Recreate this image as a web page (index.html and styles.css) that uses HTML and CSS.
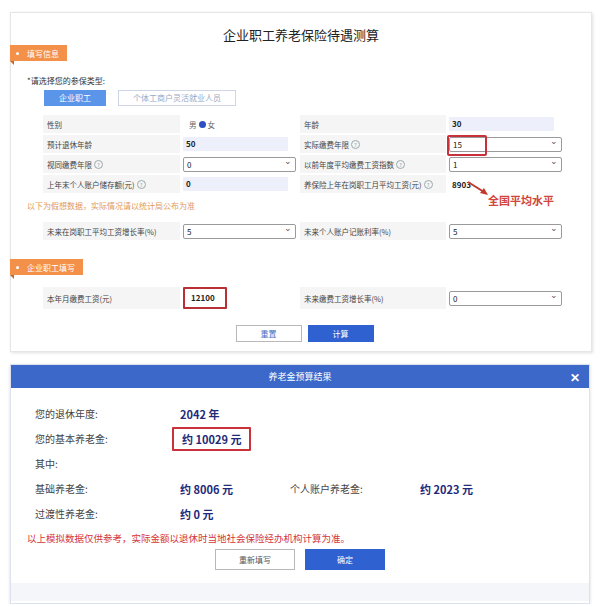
FILE: index.html
```html
<!DOCTYPE html>
<html lang="zh">
<head>
  <meta charset="UTF-8">
  <title>企业职工养老保险待遇测算</title>
  <link rel="stylesheet" href="styles.css">
</head>
<body>
  <div class="panel">
    <h2 class="title">企业职工养老保险待遇测算</h2>

    <div class="tag"><span class="dot"></span>填写信息</div>
    <p class="type-label">*请选择您的参保类型:</p>
    <div class="type-btns">
      <span class="type-btn active">企业职工</span>
      <span class="type-btn">个体工商户灵活就业人员</span>
    </div>

    <div class="grid">
      <div class="lab">性别</div>
      <div class="val"><span class="radio">男 <i class="check"></i> 女</span></div>
      <div class="lab">年龄</div>
      <div class="val"><span class="inp">30</span></div>

      <div class="lab">预计退休年龄</div>
      <div class="val"><span class="inp">50</span></div>
      <div class="lab">实际缴费年限<i class="help">?</i></div>
      <div class="val"><span class="sel mark">15</span></div>

      <div class="lab">视同缴费年限<i class="help">?</i></div>
      <div class="val"><span class="sel">0</span></div>
      <div class="lab">以前年度平均缴费工资指数<i class="help">?</i></div>
      <div class="val"><span class="sel">1</span></div>

      <div class="lab">上年末个人账户储存额(元)<i class="help">?</i></div>
      <div class="val"><span class="inp">0</span></div>
      <div class="lab">养保险上年在岗职工月平均工资(元)<i class="help">?</i></div>
      <div class="val"><span class="plain">8903</span></div>
    </div>

    <div class="note-row">
      <p class="note">以下为假想数据，实际情况请以统计局公布为准</p>
      <span class="avg">全国平均水平</span>
      <svg class="arrow" width="24" height="16" viewBox="0 0 24 16">
        <path d="M2 2 L18 12" stroke="#c0392b" stroke-width="2" fill="none"/>
        <path d="M14 13 L22 15 L18 8 Z" fill="#c0392b"/>
      </svg>
    </div>

    <div class="grid">
      <div class="lab">未来在岗职工平均工资增长率(%)</div>
      <div class="val"><span class="sel">5</span></div>
      <div class="lab">未来个人账户记账利率(%)</div>
      <div class="val"><span class="sel">5</span></div>
    </div>

    <div class="tag tag2"><span class="dot"></span>企业职工填写</div>

    <div class="grid tall">
      <div class="lab">本年月缴费工资(元)</div>
      <div class="val"><span class="plain boxed">12100</span></div>
      <div class="lab">未来缴费工资增长率(%)</div>
      <div class="val"><span class="sel">0</span></div>
    </div>

    <div class="actions">
      <span class="btn">重置</span>
      <span class="btn primary">计算</span>
    </div>
  </div>

  <div class="result">
    <div class="result-head">养老金预算结果<span class="close">✕</span></div>
    <div class="result-body">
      <div class="res-row">
        <span class="k">您的退休年度:</span><span class="v">2042 年</span>
      </div>
      <div class="res-row">
        <span class="k">您的基本养老金:</span><span class="v big">约 10029 元</span>
      </div>
      <div class="res-row">
        <span class="k">其中:</span>
      </div>
      <div class="res-row">
        <span class="k">基础养老金:</span><span class="v">约 8006 元</span>
        <span class="k k2">个人账户养老金:</span><span class="v">约 2023 元</span>
      </div>
      <div class="res-row">
        <span class="k">过渡性养老金:</span><span class="v">约 0 元</span>
      </div>
      <p class="warn">以上模拟数据仅供参考，实际金额以退休时当地社会保险经办机构计算为准。</p>
      <div class="res-actions">
        <span class="btn wide">重新填写</span>
        <span class="btn wide primary">确定</span>
      </div>
    </div>
    <div class="result-foot"></div>
  </div>
</body>
</html>
```

FILE: styles.css
```css
body {
  margin: 0;
  font-family: "Noto Sans CJK SC", "Noto Sans", sans-serif;
  color: #333;
  background: #fff;
}
.panel {
  margin: 12px 8px 0 10px;
  height: 340px;
  border: 1px solid #e6e6e6;
  box-shadow: 1px 1px 3px rgba(0,0,0,0.12);
  box-sizing: border-box;
}
.title {
  margin: 0;
  padding-top: 12px;
  font-size: 13px;
  font-weight: normal;
  line-height: 20px;
  text-align: center;
  color: #222;
}
.tag {
  position: relative;
  display: inline-flex;
  align-items: center;
  margin: 0 0 0 -1px;
  height: 16px;
  padding: 0 8px 0 6px;
  background: #f3904a;
  color: #fff;
  font-size: 8px;
  vertical-align: top;
}
.tag::after {
  content: "";
  position: absolute;
  left: 0;
  bottom: -4px;
  border-top: 4px solid #c7692a;
  border-left: 4px solid transparent;
}
.dot {
  width: 3px;
  height: 3px;
  margin-right: 8px;
  border-radius: 50%;
  background: #fff;
}
.type-label {
  margin: 6px 0 0 16px;
  font-size: 8px;
  line-height: 12px;
}
.type-btns {
  display: flex;
  gap: 12px;
  margin: 3px 0 0 33px;
}
.type-btn {
  height: 14px;
  line-height: 14px;
  padding: 0 14px;
  border: 1px solid #ccd6e6;
  color: #9aa9c4;
  font-size: 8px;
}
.type-btn.active {
  background: #5b95ea;
  border-color: #5b95ea;
  color: #fff;
}
.grid {
  display: grid;
  grid-template-columns: 137px 120px 146px 117px;
  grid-auto-rows: 18px;
  row-gap: 2px;
  margin: 9px 0 0 32px;
  width: 520px;
  background: #fff;
}
.grid.tall {
  grid-auto-rows: 22px;
  margin-top: 12px;
}
.lab {
  display: flex;
  align-items: center;
  padding-left: 4px;
  background: #f5f5f6;
  font-size: 7.5px;
  color: #444;
  white-space: nowrap;
}
.val {
  display: flex;
  align-items: center;
  padding-left: 3px;
  font-size: 8px;
  font-weight: bold;
  color: #222;
}
.help {
  display: inline-block;
  width: 7px;
  height: 7px;
  margin-left: 2px;
  border: 1px solid #9aa;
  border-radius: 50%;
  font-size: 5px;
  line-height: 7px;
  text-align: center;
  font-style: normal;
  color: #899;
}
.radio {
  font-weight: normal;
  color: #666;
  font-size: 7.5px;
  padding-left: 6px;
  display: flex;
  align-items: center;
  gap: 2px;
}
.check {
  width: 7px;
  height: 7px;
  border-radius: 50%;
  background: #2d4fbf;
}
.inp {
  width: 102px;
  height: 14px;
  line-height: 14px;
  padding-left: 3px;
  background: #edf0fa;
}
.plain {
  padding-left: 3px;
}
.sel {
  position: relative;
  width: 108px;
  height: 13px;
  line-height: 13px;
  padding-left: 3px;
  border: 1px solid #9a9a9a;
  border-radius: 2px;
  font-weight: normal;
  box-sizing: content-box;
}
.sel::after {
  content: "⌄";
  position: absolute;
  right: 3px;
  top: -4px;
  font-size: 9px;
  color: #555;
}
.sel.mark::before {
  content: "";
  position: absolute;
  left: -3px;
  top: -3px;
  width: 36px;
  height: 17px;
  border: 2px solid #c8303a;
  border-radius: 2px;
}
.boxed {
  height: 18px;
  line-height: 18px;
  padding: 0 10px 0 6px;
  border: 2px solid #b82f35;
  border-radius: 1px;
}
.note-row {
  position: relative;
  height: 20px;
}
.note {
  margin: 0;
  padding: 7px 0 0 16px;
  font-size: 8px;
  line-height: 12px;
  color: #e29a57;
}
.avg {
  position: absolute;
  left: 477px;
  top: -1px;
  font-size: 11px;
  font-weight: bold;
  color: #d2453a;
}
.arrow {
  position: absolute;
  left: 455px;
  top: -13px;
}
.tag2 {
  margin-top: 19px;
}
.actions {
  display: flex;
  justify-content: center;
  gap: 6px;
  margin: 16px 0 0 7px;
}
.btn {
  display: inline-block;
  width: 64px;
  height: 15px;
  line-height: 15px;
  text-align: center;
  border: 1px solid #b8b8b8;
  background: #fff;
  color: #4a6fc4;
  font-size: 8px;
}
.btn.primary {
  background: #2f62d0;
  border-color: #2f62d0;
  color: #fff;
}
.result {
  margin: 12px 10px 0 10px;
  height: 240px;
  border: 1px solid #dde3ee;
  box-shadow: 0 1px 3px rgba(0,0,0,0.15);
  box-sizing: border-box;
  display: flex;
  flex-direction: column;
}
.result-head {
  position: relative;
  height: 23px;
  line-height: 23px;
  background: #3b68c9;
  color: #fff;
  text-align: center;
  font-size: 9px;
}
.close {
  position: absolute;
  right: 9px;
  top: 0;
  font-size: 12px;
  font-weight: bold;
}
.result-body {
  flex: 1;
  padding: 13px 0 0 24px;
}
.res-row {
  display: flex;
  align-items: center;
  height: 25px;
  font-size: 10px;
}
.k {
  width: 145px;
  color: #444;
}
.k.k2 {
  width: 130px;
}
.v {
  width: 110px;
  font-weight: bold;
  color: #1f2a7a;
  font-size: 11px;
}
.v.big {
  width: auto;
  margin-left: -8px;
  padding: 2px 8px;
  border: 2px solid #c9323a;
  border-radius: 1px;
}
.warn {
  margin: 5px 0 0 -8px;
  font-size: 9.5px;
  line-height: 14px;
  color: #d4343a;
}
.res-actions {
  display: flex;
  justify-content: center;
  gap: 10px;
  margin: 4px 0 0 -24px;
}
.btn.wide {
  width: 78px;
  height: 19px;
  line-height: 19px;
  color: #555;
}
.btn.wide.primary {
  color: #fff;
}
.result-foot {
  height: 18px;
  margin-bottom: 2px;
  background: #f4f6f9;
}
```
